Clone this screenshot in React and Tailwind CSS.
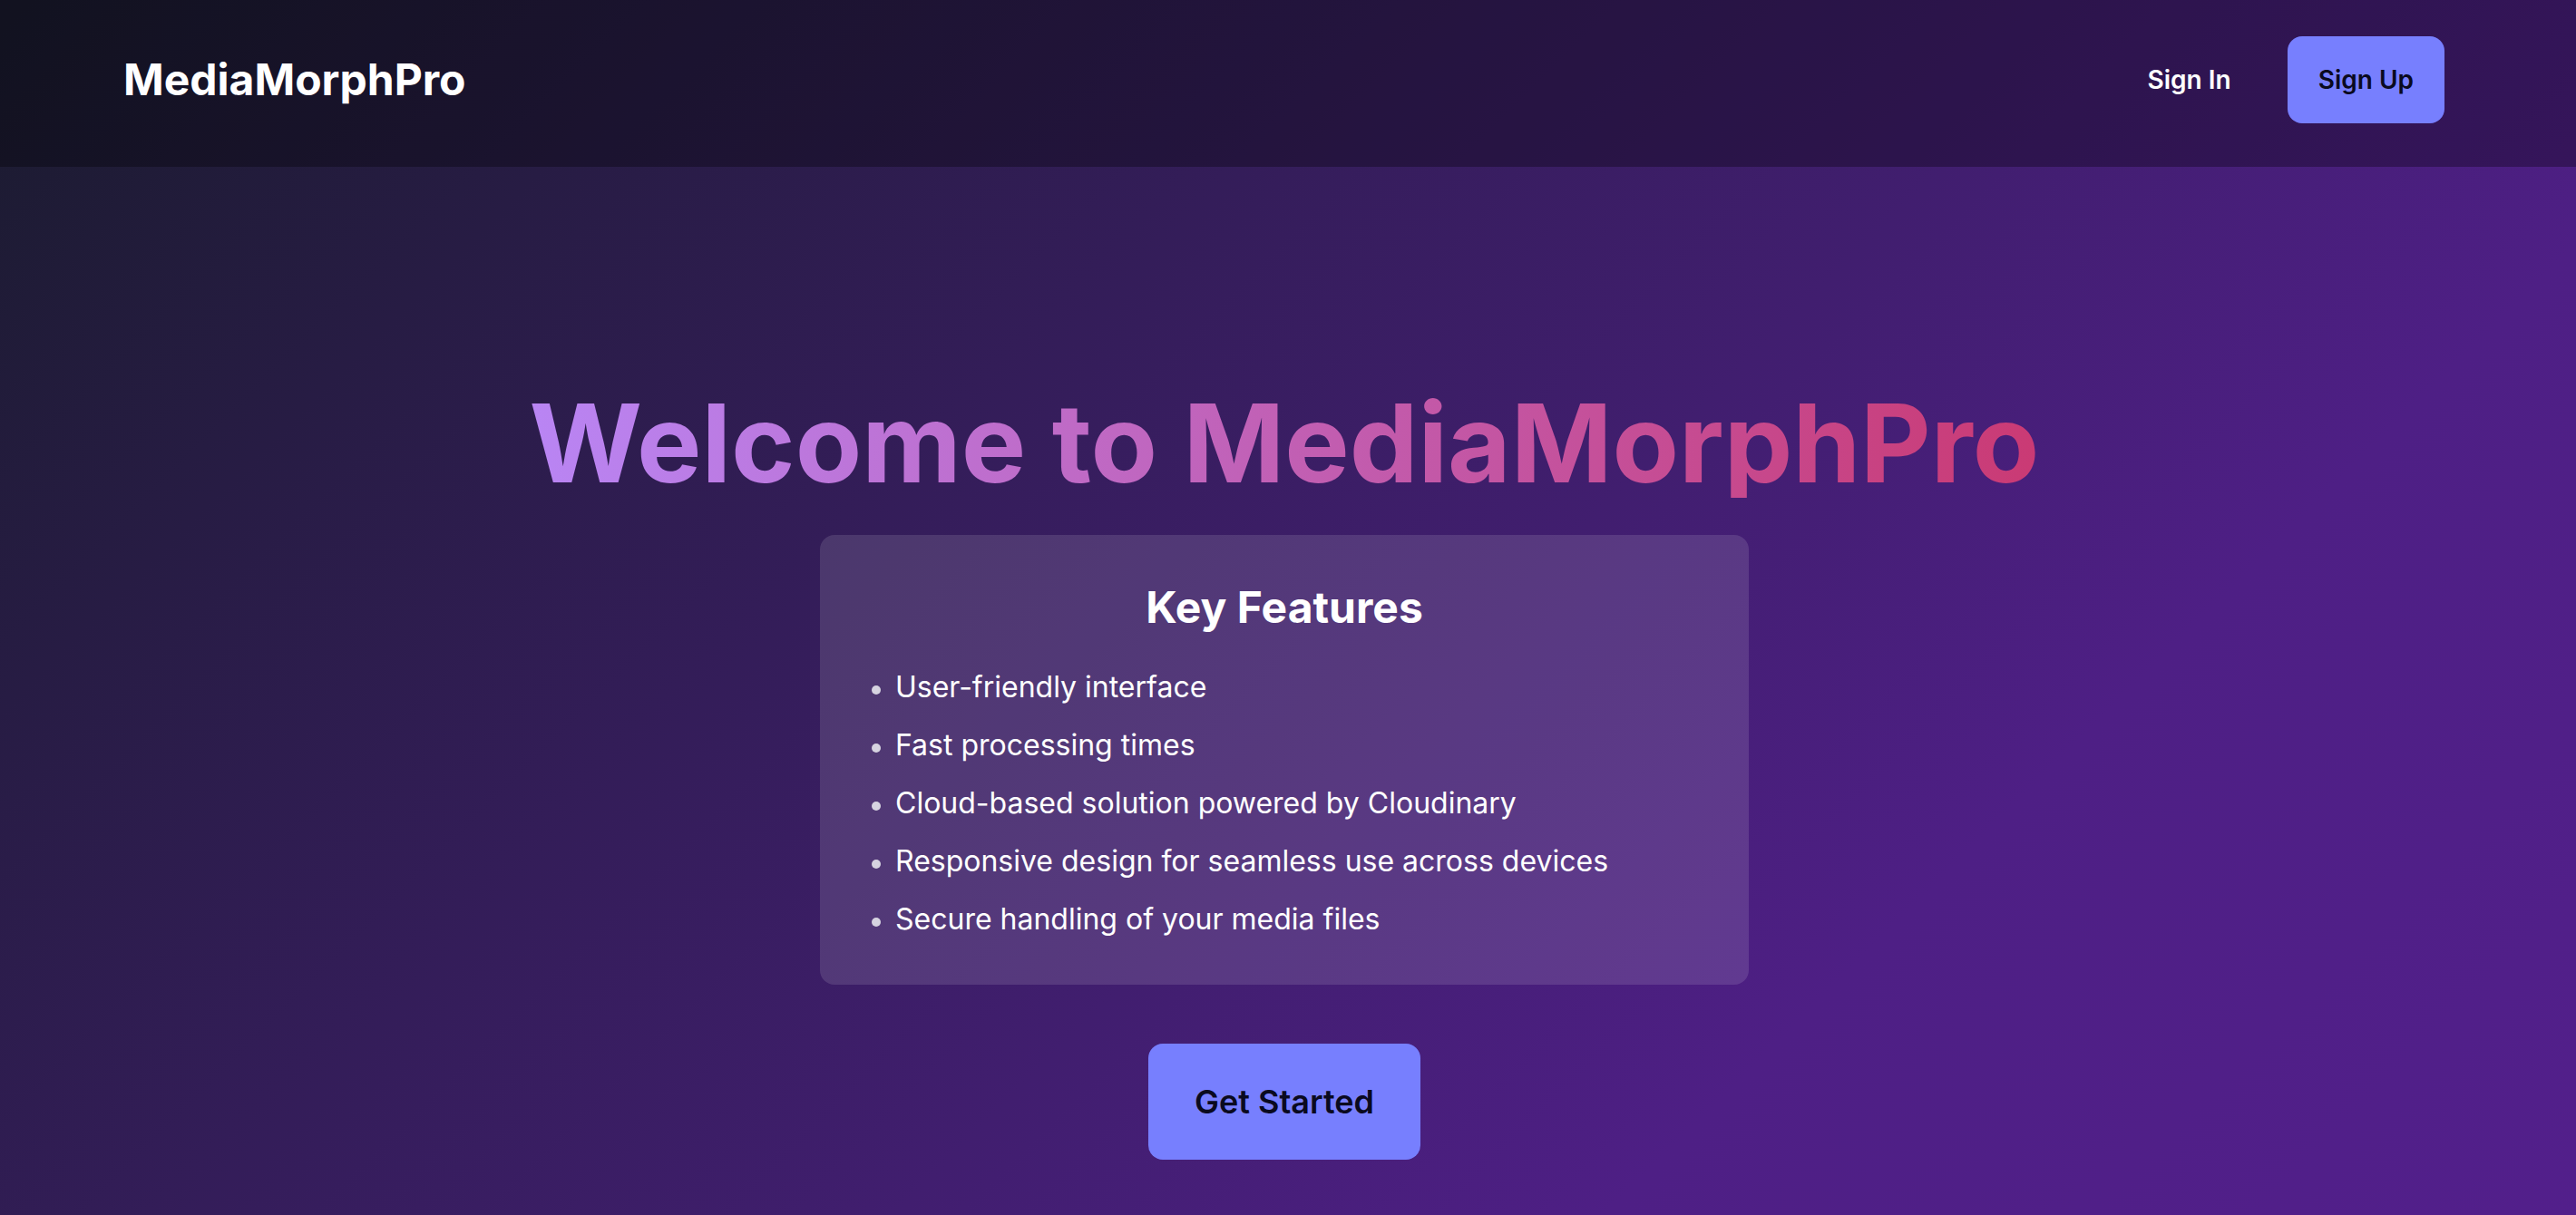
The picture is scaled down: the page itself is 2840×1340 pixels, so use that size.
import React from "react";

const features = [
  "User-friendly interface",
  "Fast processing times",
  "Cloud-based solution powered by Cloudinary",
  "Responsive design for seamless use across devices",
  "Secure handling of your media files",
];

export default function App() {
  return (
    <div className="h-screen overflow-hidden font-['Inter','Noto_Sans',sans-serif]">
      <div className="min-h-[1524px] bg-[linear-gradient(135deg,#1a1b2e_0px,#4e1f85_2200px,#531f8c_3086px)] text-white">
        {/* Navbar */}
        <nav className="h-[184px] bg-black/30 flex items-center pb-[8px] pl-[136px] pr-[145px]">
          <a href="#" className="text-[48px] font-bold leading-none">
            MediaMorphPro
          </a>
          <div className="ml-auto flex items-center gap-[30px]">
            <button className="h-[96px] px-[32px] text-[28px] font-semibold text-white">
              Sign In
            </button>
            <button className="h-[96px] px-[34px] rounded-[16px] bg-[#777ffe] text-[28px] font-semibold text-[#0a0a1f]">
              Sign Up
            </button>
          </div>
        </nav>

        {/* Hero */}
        <section className="min-h-[1340px] flex flex-col items-center justify-center pr-[8px]">
          <h1 className="text-[120px] font-bold leading-none mb-[41px] bg-[linear-gradient(to_right,#b985f4,#ca3a74)] bg-clip-text text-transparent">
            Welcome to MediaMorphPro
          </h1>
          <div className="w-[1024px] rounded-[16px] bg-white/[0.12] p-[48px]">
            <h2 className="text-[48px] leading-[64px] font-bold text-center mb-[32px]">
              Key Features
            </h2>
            <ul className="space-y-[16px] text-[32px] leading-[48px]">
              {features.map((f) => (
                <li key={f} className="flex items-start">
                  <span className="mt-[22px] ml-[9px] mr-[16px] w-[10px] h-[10px] shrink-0 rounded-full bg-[#d6d3e0]"></span>
                  {f}
                </li>
              ))}
            </ul>
          </div>
          <button className="mt-[65px] h-[128px] px-[51px] rounded-[16px] bg-[#777ffe] text-[36px] font-semibold text-[#0a0a1f]">
            Get Started
          </button>
        </section>
      </div>
    </div>
  );
}
